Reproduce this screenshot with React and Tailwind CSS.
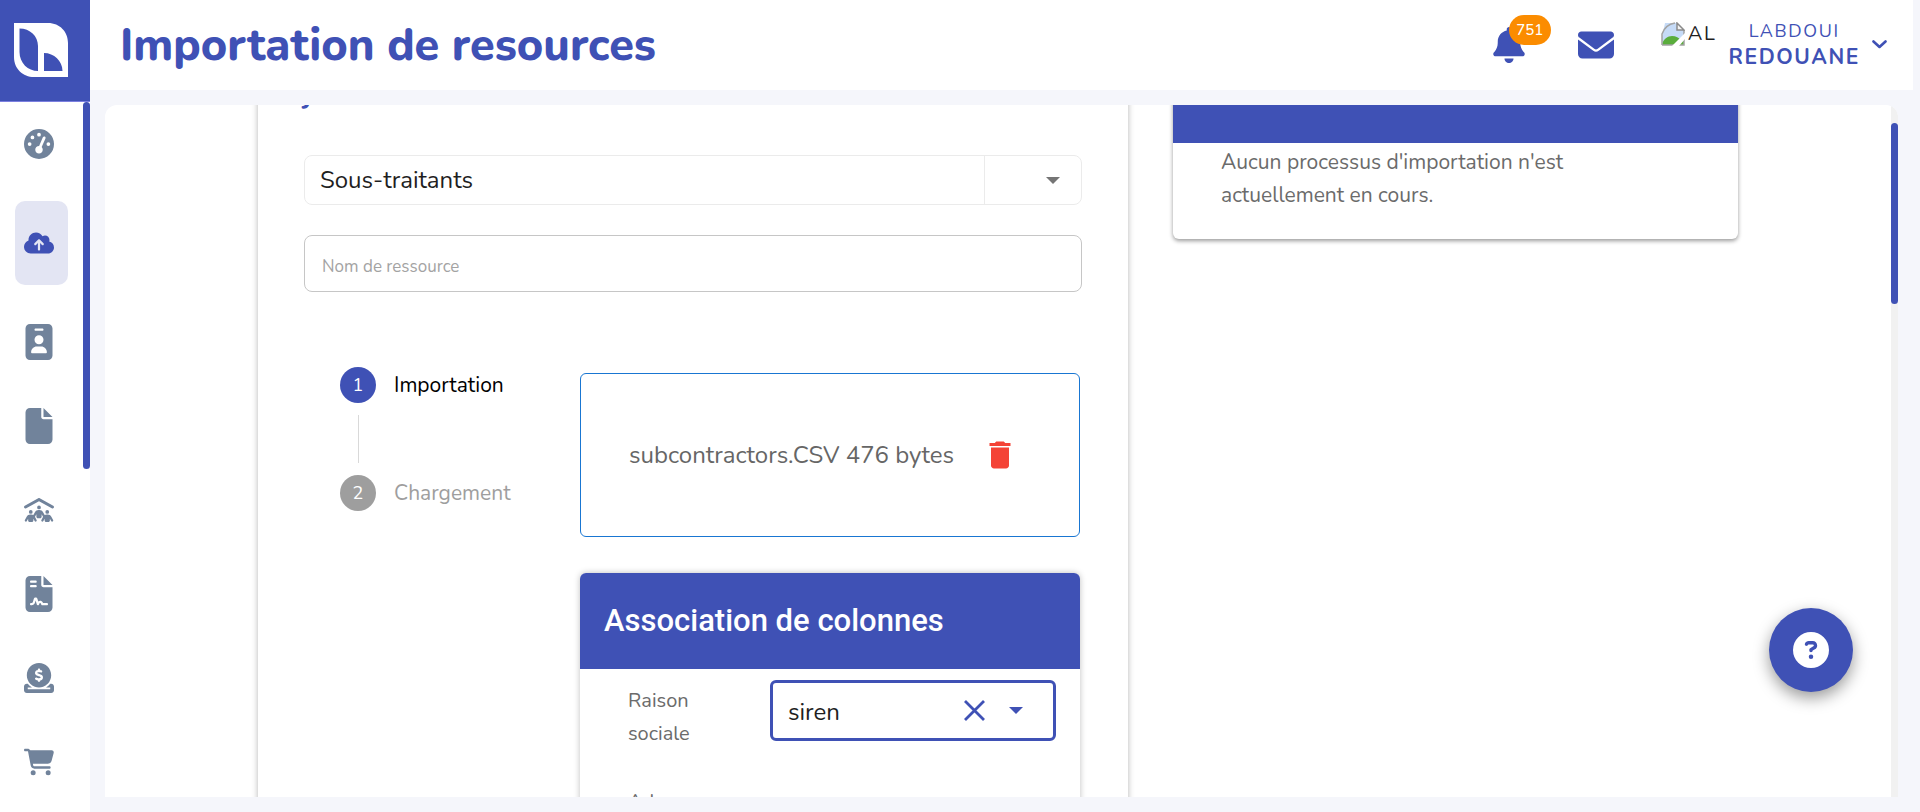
import React from "react";
import {
  FaGaugeHigh,
  FaCloudArrowUp,
  FaIdBadge,
  FaFile,
  FaPeopleRoof,
  FaFileContract,
  FaCircleDollarToSlot,
  FaCartShopping,
  FaBell,
  FaEnvelope,
  FaCircleQuestion,
} from "react-icons/fa6";
import { MdDelete } from "react-icons/md";

const NAV_ITEMS = [
  { label: "Tableau de bord", Icon: FaGaugeHigh },
  { label: "Importation", Icon: FaCloudArrowUp, active: true },
  { label: "Personnel", Icon: FaIdBadge },
  { label: "Documents", Icon: FaFile },
  { label: "Equipes", Icon: FaPeopleRoof },
  { label: "Contrats", Icon: FaFileContract },
  { label: "Paiements", Icon: FaCircleDollarToSlot },
  { label: "Achats", Icon: FaCartShopping },
];

function Logo() {
  return (
    <svg viewBox="0 0 54 54" className="size-[54px]" aria-hidden="true">
      <path
        fillRule="evenodd"
        fill="#fff"
        d="M0 0H34C46 0 54 9 54 20V54H20C9 54 0 46 0 34ZM5.500 5.500V29C5.500 40 14 48 24 48V23C24 13 16 5.500 5.500 5.500ZM30 30V48H48.500C48.500 38 40 30 30 30Z"
      />
    </svg>
  );
}

function Caret({ className }) {
  return (
    <svg viewBox="0 0 14 7" className={className} aria-hidden="true">
      <path d="M0 0H14L7 7Z" fill="currentColor" />
    </svg>
  );
}

function BrokenImage() {
  return (
    <svg viewBox="0 0 24 24" className="size-6" aria-hidden="true">
      <path d="M4 1H16L23 8V23H1V15Z" fill="#c6dbf7" />
      <path d="M1 23C2 17 7 14 11 14C15 14 18 16 20 18L23 17V23Z" fill="#5aad3c" />
      <path d="M1 23V12C3 6 8 2 14 1M1 23H23V8" fill="none" stroke="#a3a3a3" strokeWidth="1.500" />
      <path d="M11 24L24 11V17L18 24Z" fill="#fff" />
      <path d="M16 1V8H23L16 1Z" fill="#f4f4f4" stroke="#8b8b8b" strokeWidth="1.500" />
    </svg>
  );
}

function NavItem({ label, Icon, active }) {
  return (
    <a
      href="#"
      aria-label={label}
      className={
        active
          ? "my-[15px] flex h-[84px] w-[53px] items-center rounded-[10px] bg-[#e3e5f3] pl-[9px] text-[#3f51b5]"
          : "flex h-[84px] w-[53px] items-center pl-[9px] text-[#71839b]"
      }
    >
      <Icon className="h-9 w-[30px]" />
    </a>
  );
}

function Sidebar() {
  return (
    <aside className="flex w-[90px] shrink-0 flex-col bg-white">
      <a
        href="#"
        aria-label="Accueil"
        className="flex h-[102px] shrink-0 items-center border-b border-[#7b7fe0] bg-[#3f51b5] pb-px pl-[14px]"
      >
        <Logo />
      </a>
      <div className="flex min-h-0 flex-1 justify-between overflow-hidden pl-[15px]">
        <nav className="flex flex-col">
          {NAV_ITEMS.map((item) => (
            <NavItem key={item.label} {...item} />
          ))}
        </nav>
        <div className="h-[367px] w-[7px] rounded-full bg-[#3f51b5]" />
      </div>
    </aside>
  );
}

function Header() {
  return (
    <header className="mr-[7px] flex h-[90px] shrink-0 items-center justify-between bg-white pl-[30px] pr-[26px]">
      <h1 className="text-[45px] leading-none font-extrabold text-[#3f51b5]">Importation de resources</h1>
      <div className="flex items-center text-[#3f51b5]">
        <button type="button" aria-label="Notifications" className="relative mr-[53px]">
          <FaBell className="h-9 w-8" />
          <span className="absolute -top-3 left-4 flex h-[30px] w-[42px] items-center justify-center rounded-full bg-[#fb8c00] text-[15px] font-medium text-white">
            751
          </span>
        </button>
        <button type="button" aria-label="Messages" className="mr-[47px]">
          <FaEnvelope className="size-9" />
        </button>
        <button type="button" className="flex items-center pb-0.5 tracking-widest">
          <span className="mb-5 mr-3 flex items-center gap-[3px] text-xl text-[#1f1f1f]">
            <BrokenImage />
            AL
          </span>
          <span className="mr-3 flex flex-col items-center leading-[26px]">
            <span className="text-lg leading-[26px]">LABDOUI</span>
            <span className="text-[21px] font-bold">REDOUANE</span>
          </span>
          <svg viewBox="0 0 15 9" className="h-[9px] w-[15px]" aria-hidden="true">
            <path
              d="M1.500 1.500L7.500 7L13.500 1.500"
              fill="none"
              stroke="currentColor"
              strokeWidth="2.600"
              strokeLinecap="round"
              strokeLinejoin="round"
            />
          </svg>
        </button>
      </div>
    </header>
  );
}

function Step({ number, label, active }) {
  return (
    <li className="flex items-center gap-[18px]">
      <span
        className={
          active
            ? "flex size-9 items-center justify-center rounded-full bg-[#3f51b5] text-lg text-white"
            : "flex size-9 items-center justify-center rounded-full bg-[#9e9e9e] text-lg text-white"
        }
      >
        {number}
      </span>
      <span className={active ? "pt-0.5 text-[21px] text-black" : "pt-0.5 text-[21px] text-[#9e9e9e]"}>{label}</span>
    </li>
  );
}

function Stepper() {
  return (
    <ol className="-mt-1.5 ml-9 w-[240px] shrink-0">
      <Step number="1" label="Importation" active />
      <li aria-hidden="true" className="my-3 ml-[18px] h-12 w-px bg-[#d9d9d9]" />
      <Step number="2" label="Chargement" />
    </ol>
  );
}

function ColumnMapping() {
  return (
    <section className="mt-9 rounded-md bg-white shadow-[0_0_6px_rgba(0,0,0,0.25)]">
      <h3 className="flex h-24 items-center rounded-t-md bg-[#3f51b5] px-6 font-[Roboto,sans-serif] text-[31px] font-medium text-white">
        Association de colonnes
      </h3>
      <div className="flex justify-between pt-[11px] pr-6 pb-[35px] pl-12">
        <label htmlFor="raison" className="mt-1 w-20 text-[20px] leading-[33px] text-[#6b6b6b]">
          Raison sociale
        </label>
        <div className="flex h-[61px] w-[286px] items-center rounded-md border-[3px] border-[#3f51b5] pr-[30px] pl-[15px] text-[#3f51b5]">
          <select
            id="raison"
            className="min-w-0 flex-1 appearance-none bg-transparent pt-0.5 text-2xl text-[#1f1f1f] outline-none"
          >
            <option>siren</option>
          </select>
          <button type="button" aria-label="Effacer" className="mr-6">
            <svg viewBox="0 0 21 21" className="size-[21px]" aria-hidden="true">
              <path d="M1 1L20 20M20 1L1 20" stroke="currentColor" strokeWidth="2.800" />
            </svg>
          </button>
          <Caret className="h-[7px] w-[14px]" />
        </div>
      </div>
      <div className="pb-8 pl-12 text-[20px] leading-[33px] text-[#6b6b6b]">Adresse</div>
    </section>
  );
}

function ImportCard() {
  return (
    <section className="bg-white px-[46px] shadow-[0_0_6px_rgba(0,0,0,0.3)]">
      <h2 className="-ml-[23px] h-[90px] pt-[13px] text-[30px] leading-8 font-bold text-[#3f51b5]">Ajouter</h2>
      <div className="relative flex h-[50px] items-center rounded-lg border border-[#ebebeb]">
        <select
          aria-label="Type de ressource"
          className="h-full w-full appearance-none bg-transparent pl-[15px] text-2xl text-[#1f1f1f] outline-none"
        >
          <option>Sous-traitants</option>
        </select>
        <span className="pointer-events-none absolute inset-y-0 right-0 flex w-[97px] items-center justify-end border-l border-[#ebebeb] pr-[21px] text-[#757575]">
          <Caret className="h-[7px] w-[14px]" />
        </span>
      </div>
      <input
        type="text"
        aria-label="Nom de ressource"
        placeholder="Nom de ressource"
        className="mt-[30px] block h-[57px] w-full rounded-lg border border-[#c6c6c6] px-[17px] pt-1.5 text-[17px] outline-none placeholder:text-[#a3a3a3]"
      />
      <div className="mt-[81px] flex">
        <Stepper />
        <div className="min-w-0 flex-1 pr-[2px]">
          <div className="flex h-[164px] items-center justify-between rounded-md border border-[#1976d2] pr-[61px] pl-12">
            <span className="text-2xl text-[#666]">subcontractors.CSV 476 bytes</span>
            <button type="button" aria-label="Supprimer le fichier" className="text-[#f44336]">
              <MdDelete className="size-9" />
            </button>
          </div>
          <ColumnMapping />
        </div>
      </div>
    </section>
  );
}

function ProcessCard() {
  return (
    <section className="self-start rounded-b-md bg-white shadow-[0_2px_4px_rgba(0,0,0,0.4)]">
      <div className="h-[78px] bg-[#3f51b5]" />
      <p className="h-24 max-w-[460px] px-12 pt-[3px] text-[21px] leading-[33px] text-[#6b6b6b]">
        Aucun processus d'importation n'est actuellement en cours.
      </p>
    </section>
  );
}

export default function App() {
  return (
    <div className="flex h-screen bg-[#f5f6fb] font-[Nunito,Lato,sans-serif] text-[#1f1f1f]">
      <Sidebar />
      <div className="flex min-w-0 flex-1 flex-col">
        <Header />
        <main className="mt-[15px] mr-[22px] mb-[15px] ml-[15px] flex min-h-0 flex-1 overflow-hidden rounded-t-[12px] bg-white">
          <div className="-mt-10 grid min-w-0 flex-1 grid-cols-[870fr_565fr] gap-[45px] px-[153px]">
            <ImportCard />
            <ProcessCard />
          </div>
          <div className="w-[7px] bg-[#f1f1f1] pt-[18px]">
            <div className="h-[181px] rounded-full bg-[#3f51b5]" />
          </div>
        </main>
      </div>
      <button
        type="button"
        aria-label="Aide"
        className="fixed right-[67px] bottom-[120px] flex size-[84px] items-center justify-center rounded-full bg-[#3f51b5] text-white shadow-[0_6px_16px_rgba(0,0,0,0.4)]"
      >
        <FaCircleQuestion className="size-9" />
      </button>
    </div>
  );
}
